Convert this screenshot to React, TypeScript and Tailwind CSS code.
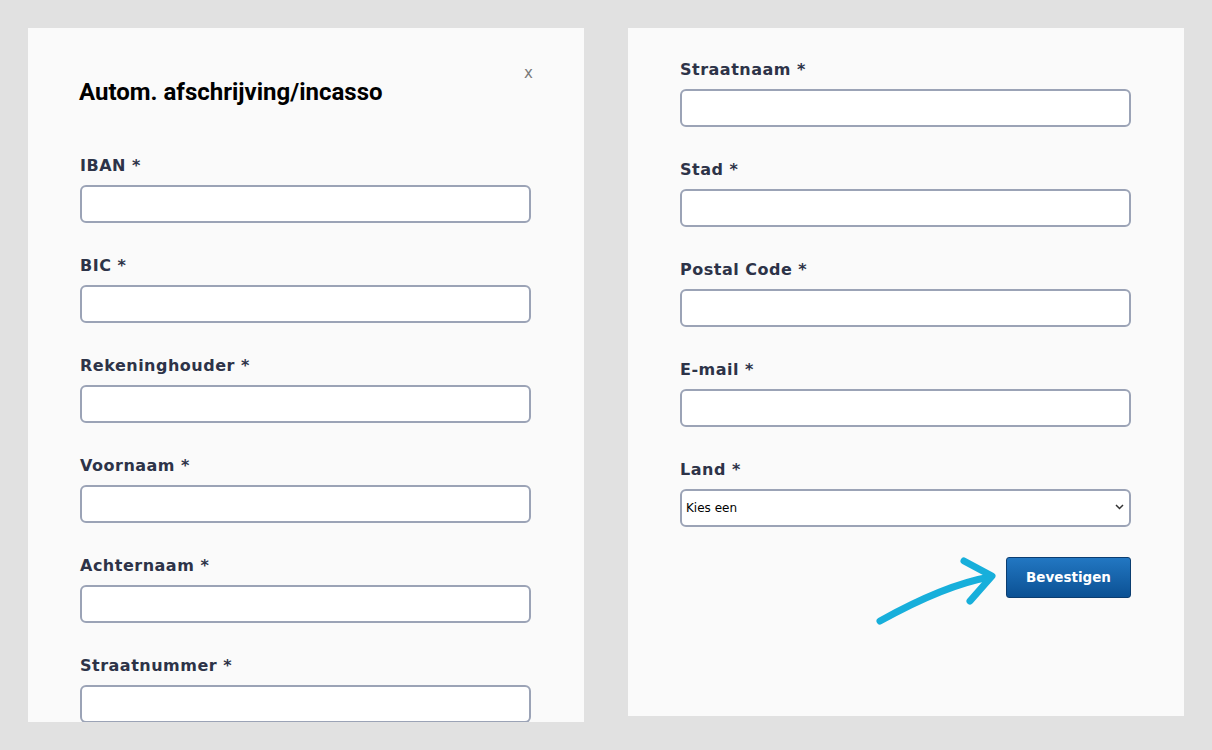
import React from 'react';

const labelFont = { fontFamily: '"DejaVu Sans", Verdana, sans-serif' };

interface FieldProps {
  label: string;
}

const Field: React.FC<FieldProps> = ({ label }) => (
  <div className="flex flex-col">
    <label
      className="text-[16px] leading-[18px] font-bold text-[#2d3348] tracking-[0.5px] mb-[10px]"
      style={labelFont}
    >
      {label} *
    </label>
    <input
      type="text"
      className="h-[38px] w-full bg-white border-2 border-[#9ba3b6] rounded-[6px] outline-none px-2"
    />
  </div>
);

const Arrow: React.FC = () => (
  <svg
    className="absolute left-[-130px] top-[-2px]"
    width="130"
    height="72"
    viewBox="0 0 130 72"
    fill="none"
    stroke="#17afdb"
    strokeWidth="7"
    strokeLinecap="round"
    strokeLinejoin="round"
  >
    {/* shaft */}
    <path d="M4 66 C 40 46, 80 28, 114 22" />
    {/* head */}
    <path d="M88 6 L 116 21 L 94 46" />
  </svg>
);

export default function App() {
  return (
    <div className="w-full h-[750px] bg-[#e1e1e1] overflow-hidden">
      <div className="flex gap-[44px] pl-[28px] pt-[28px]">
        {/* Left panel */}
        <div className="w-[556px] h-[694px] bg-[#fafafa] overflow-hidden pl-[51px] pr-[53px]">
          <div className="flex items-start justify-between pt-[50px] mb-[51px]">
            <h2
              className="text-[24px] leading-[28px] font-bold text-black"
              style={{ fontFamily: 'Roboto, "Liberation Sans", sans-serif' }}
            >
              Autom. afschrijving/incasso
            </h2>
            <button
              className="text-[15px] leading-none text-[#7a7a7a] -mr-[2px] -mt-[12px]"
              style={labelFont}
            >
              x
            </button>
          </div>
          <div className="flex flex-col gap-[34px] pl-[1px]">
            <Field label="IBAN" />
            <Field label="BIC" />
            <Field label="Rekeninghouder" />
            <Field label="Voornaam" />
            <Field label="Achternaam" />
            <Field label="Straatnummer" />
          </div>
        </div>

        {/* Right panel */}
        <div className="w-[556px] h-[688px] bg-[#fafafa] pl-[51px] pr-[53px] pt-[33px]">
          <div className="flex flex-col gap-[34px] pl-[1px]">
            <Field label="Straatnaam" />
            <Field label="Stad" />
            <Field label="Postal Code" />
            <Field label="E-mail" />
            <div className="flex flex-col">
              <label
                className="text-[16px] leading-[18px] font-bold text-[#2d3348] tracking-[0.5px] mb-[10px]"
                style={labelFont}
              >
                Land *
              </label>
              <div className="relative">
                <select
                  className="appearance-none h-[38px] w-full bg-white border-2 border-[#9ba3b6] rounded-[6px] outline-none pl-[4px] text-[12px] text-black"
                  style={labelFont}
                  defaultValue=""
                >
                  <option value="">Kies een</option>
                </select>
                <svg
                  className="absolute right-[7px] top-[15px] pointer-events-none"
                  width="9"
                  height="6"
                  viewBox="0 0 9 6"
                  fill="none"
                  stroke="#333"
                  strokeWidth="1.5"
                >
                  <path d="M1 1 L4.5 4.5 L8 1" />
                </svg>
              </div>
            </div>
          </div>
          <div className="flex justify-end mt-[30px] pl-[1px]">
            <div className="relative">
              <Arrow />
              <button
                className="h-[41px] w-[125px] rounded-[3px] border border-[#0b3d70] bg-gradient-to-b from-[#2277c2] to-[#0b5194] text-white text-[13.5px] font-bold"
                style={labelFont}
              >
                Bevestigen
              </button>
            </div>
          </div>
        </div>
      </div>
    </div>
  );
}
